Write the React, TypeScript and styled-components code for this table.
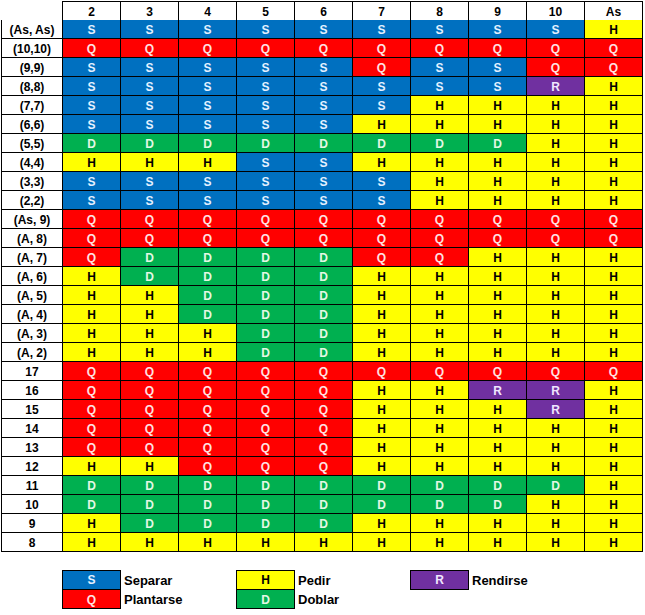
import React from 'react';
import styled, { createGlobalStyle } from 'styled-components';

type Move = 'S' | 'Q' | 'H' | 'D' | 'R';

const moveColors: Record<Move, { bg: string; fg: string }> = {
  S: { bg: '#0070c0', fg: '#e4f1ff' },
  Q: { bg: '#ff0000', fg: '#ffe2e2' },
  H: { bg: '#ffff00', fg: '#000000' },
  D: { bg: '#00b050', fg: '#e4f8e4' },
  R: { bg: '#7030a0', fg: '#f0e6ff' },
};

const dealerCards = ['2', '3', '4', '5', '6', '7', '8', '9', '10', 'As'];

const rows: [string, string][] = [
  ['(As, As)', 'SSSSSSSSSH'],
  ['(10,10)', 'QQQQQQQQQQ'],
  ['(9,9)', 'SSSSSQSSQQ'],
  ['(8,8)', 'SSSSSSSSRH'],
  ['(7,7)', 'SSSSSSHHHH'],
  ['(6,6)', 'SSSSSHHHHH'],
  ['(5,5)', 'DDDDDDDDHH'],
  ['(4,4)', 'HHHSSHHHHH'],
  ['(3,3)', 'SSSSSSHHHH'],
  ['(2,2)', 'SSSSSSHHHH'],
  ['(As, 9)', 'QQQQQQQQQQ'],
  ['(A, 8)', 'QQQQQQQQQQ'],
  ['(A, 7)', 'QDDDDQQHHH'],
  ['(A, 6)', 'HDDDDHHHHH'],
  ['(A, 5)', 'HHDDDHHHHH'],
  ['(A, 4)', 'HHDDDHHHHH'],
  ['(A, 3)', 'HHHDDHHHHH'],
  ['(A, 2)', 'HHHDDHHHHH'],
  ['17', 'QQQQQQQQQQ'],
  ['16', 'QQQQQHHRRH'],
  ['15', 'QQQQQHHHRH'],
  ['14', 'QQQQQHHHHH'],
  ['13', 'QQQQQHHHHH'],
  ['12', 'HHQQQHHHHH'],
  ['11', 'DDDDDDDDDH'],
  ['10', 'DDDDDDDDHH'],
  ['9', 'HDDDDHHHHH'],
  ['8', 'HHHHHHHHHH'],
];

const GlobalStyle = createGlobalStyle`
  html, body {
    margin: 0;
    padding: 0;
    background: #ffffff;
  }
  body {
    font-family: "Liberation Sans", Arial, sans-serif;
  }
  * {
    box-sizing: border-box;
  }
`;

const Page = styled.div`
  padding: 1px 0 0 1px;
  width: 645px;
`;

const Grid = styled.div`
  display: grid;
  grid-template-columns: 62px repeat(10, 58px);
  grid-auto-rows: 19px;
`;

const Cell = styled.div<{ $move?: Move; $first?: boolean; $top?: boolean; $corner?: boolean }>`
  display: flex;
  align-items: center;
  justify-content: center;
  height: ${(p) => (p.$top ? '20px' : '19px')};
  border-right: 1px solid #000;
  border-bottom: 1px solid #000;
  border-left: ${(p) => (p.$first && !p.$corner ? '1px solid #000' : 'none')};
  border-top: ${(p) => (p.$top && !p.$corner ? '1px solid #000' : 'none')};
  background: ${(p) => (p.$move ? moveColors[p.$move].bg : '#ffffff')};
  color: ${(p) => (p.$move ? moveColors[p.$move].fg : '#000000')};
  font-size: 12px;
  font-weight: bold;
  line-height: 18px;
  padding-top: 1px;
`;

const Legend = styled.div`
  display: grid;
  grid-template-columns: 62px repeat(10, 58px);
  grid-template-rows: 20px 19px;
  margin-top: 18px;
`;

const Swatch = styled.div<{ $move: Move; $col: number; $row: number }>`
  grid-column: ${(p) => p.$col};
  grid-row: ${(p) => p.$row};
  margin-left: -1px;
  display: flex;
  align-items: center;
  justify-content: center;
  border: 1px solid #000;
  border-top: ${(p) => (p.$row === 1 ? '1px solid #000' : 'none')};
  background: ${(p) => moveColors[p.$move].bg};
  color: ${(p) => moveColors[p.$move].fg};
  font-size: 12px;
  font-weight: bold;
  padding-top: ${(p) => (p.$row === 1 ? '0' : '1px')};
`;

const LegendLabel = styled.div<{ $col: number; $row: number }>`
  grid-column: ${(p) => p.$col} / span 2;
  grid-row: ${(p) => p.$row};
  display: flex;
  align-items: center;
  padding-left: 3px;
  padding-top: ${(p) => (p.$row === 1 ? '1px' : '0')};
  font-size: 13px;
  font-weight: bold;
  color: #000;
  white-space: nowrap;
`;

const legendItems: { move: Move; label: string; col: number; row: number }[] = [
  { move: 'S', label: 'Separar', col: 2, row: 1 },
  { move: 'Q', label: 'Plantarse', col: 2, row: 2 },
  { move: 'H', label: 'Pedir', col: 5, row: 1 },
  { move: 'D', label: 'Doblar', col: 5, row: 2 },
  { move: 'R', label: 'Rendirse', col: 8, row: 1 },
];

export default function App() {
  return (
    <Page>
      <GlobalStyle />
      <Grid>
        <Cell $first $top $corner />
        {dealerCards.map((card) => (
          <Cell key={card} $top>
            {card}
          </Cell>
        ))}
        {rows.map(([hand, moves]) => (
          <React.Fragment key={hand}>
            <Cell $first>{hand}</Cell>
            {moves.split('').map((m, i) => (
              <Cell key={i} $move={m as Move}>
                {m}
              </Cell>
            ))}
          </React.Fragment>
        ))}
      </Grid>
      <Legend>
        {legendItems.map((item) => (
          <React.Fragment key={item.move}>
            <Swatch $move={item.move} $col={item.col} $row={item.row}>
              {item.move}
            </Swatch>
            <LegendLabel $col={item.col + 1} $row={item.row}>
              {item.label}
            </LegendLabel>
          </React.Fragment>
        ))}
      </Legend>
    </Page>
  );
}
